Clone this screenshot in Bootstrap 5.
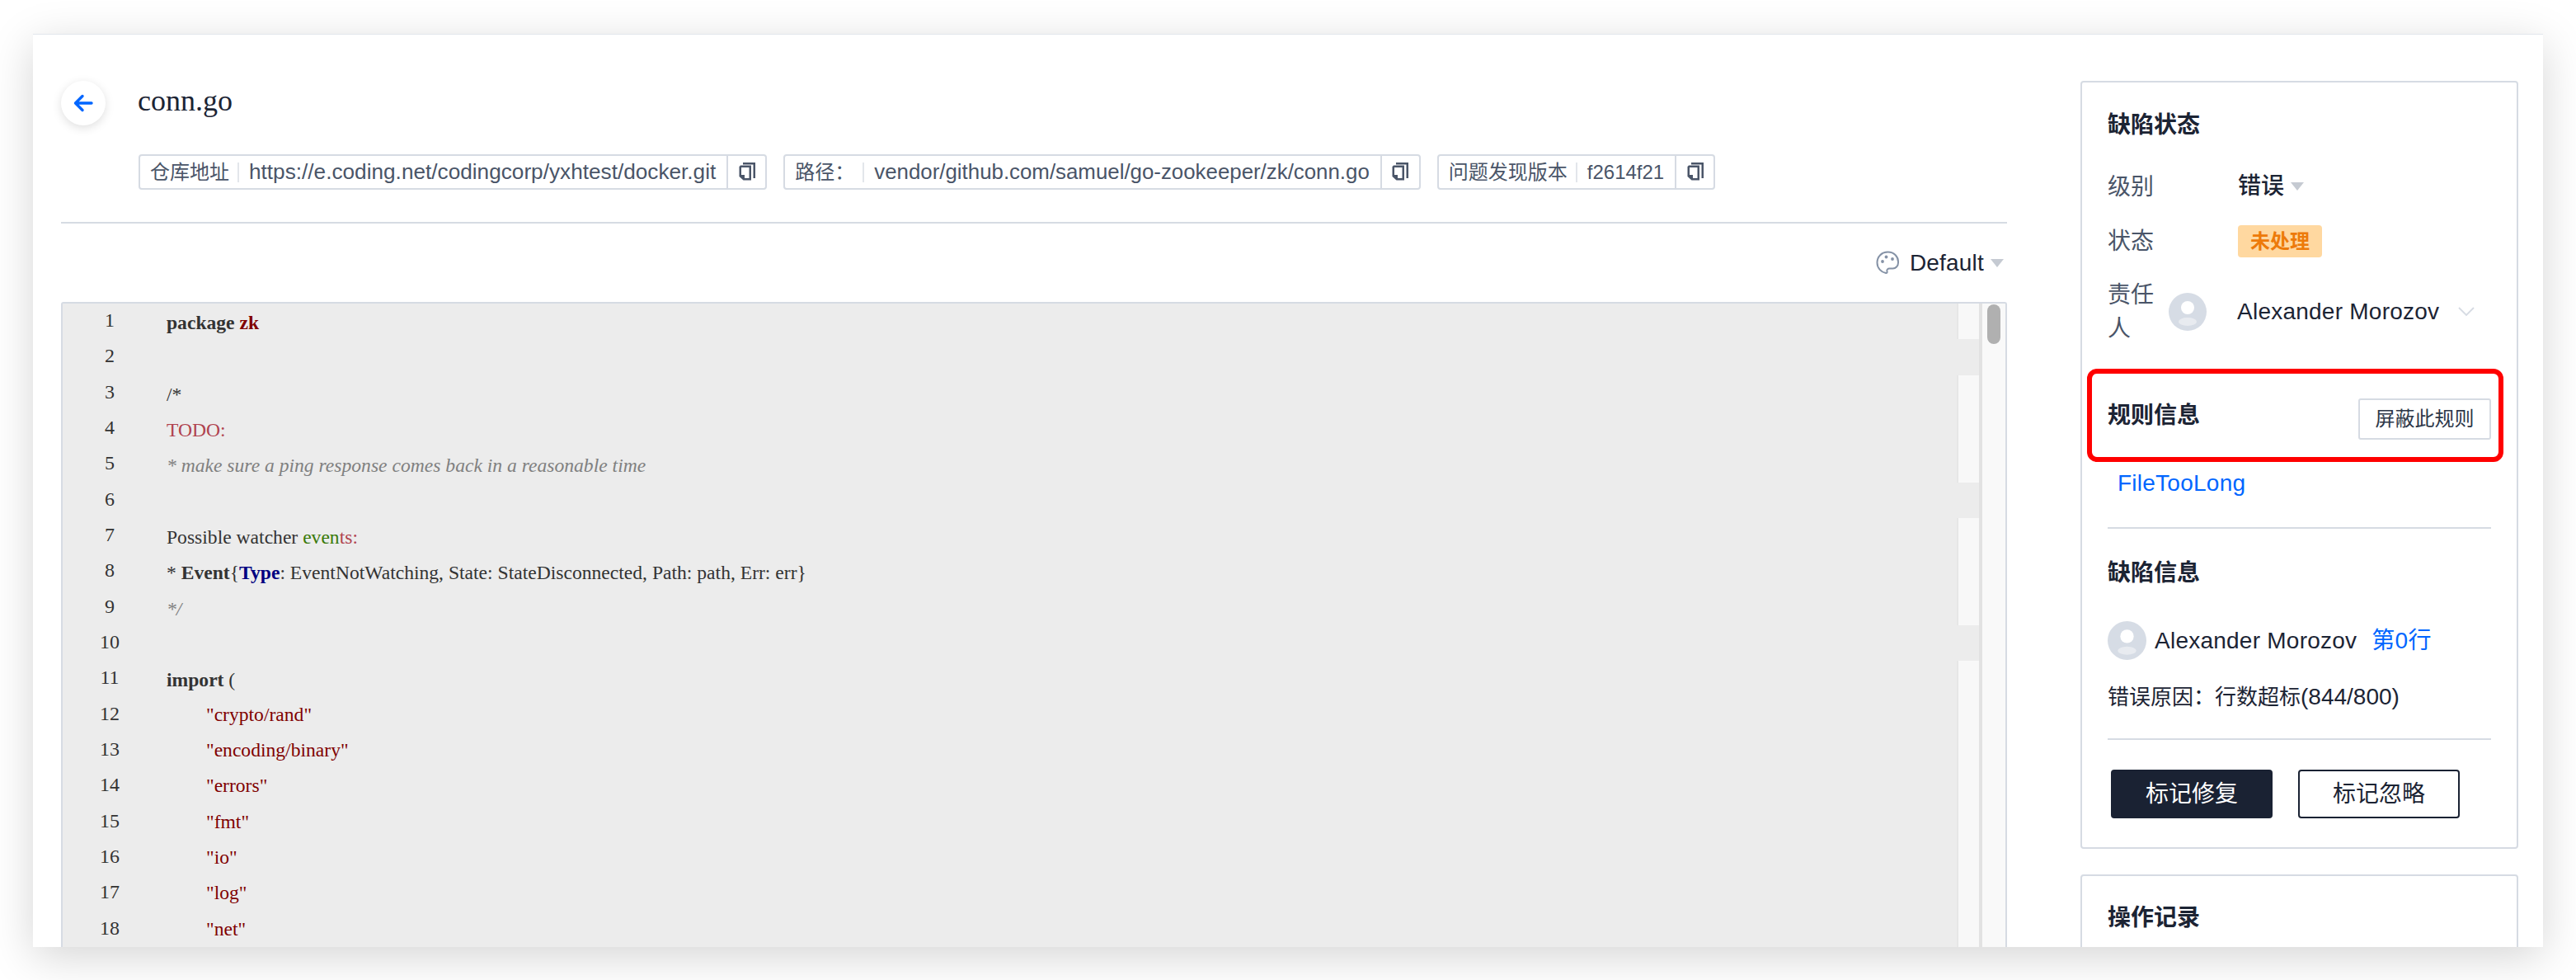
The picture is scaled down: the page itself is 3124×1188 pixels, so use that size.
<!DOCTYPE html>
<html lang="zh">
<head>
<meta charset="utf-8">
<title>conn.go</title>
<link rel="stylesheet" href="https://cdn.jsdelivr.net/npm/bootstrap@5.3.0/dist/css/bootstrap.min.css">
<style>
html,body{height:100%;}
body{background:#fff;overflow:hidden;font-family:"Liberation Sans","Noto Sans CJK SC",sans-serif;font-size:28px;color:#1c2434;}
.win{margin:41px 40px 0;height:1107px;background:#fff;border-top:1px solid #e2e6ec;box-shadow:0 12px 50px rgba(0,0,0,.17);overflow:hidden;position:relative;padding:0 30px 0 34px;}
.leftcol{width:2360px;padding-top:56px;height:1200px;}
.backbtn{width:54px;height:54px;border-radius:50%;background:#fff;box-shadow:0 3px 12px rgba(0,0,0,.13);color:#0066ff;}
.fname{font-family:"Liberation Serif",serif;font-size:36px;line-height:54px;margin-left:39px;margin-top:-3px;color:#1c2434;height:54px;}
.chips{margin:35px 0 0 94px;gap:20px;}
.chip{height:43px;border:2px solid #d6dbe3;border-radius:4px;font-size:24px;color:#4a5568;white-space:nowrap;}
.chip .lab{padding:0 12px;position:relative;}
.chip .lab::after{content:"";position:absolute;right:0;top:6px;bottom:6px;width:2px;background:#e3e6eb;}
.chip .val{padding:0 13px 0 12px;font-size:25.85px;}
.chip .val.wd{font-size:26.2px;}
.chip .val.sm{font-size:24px;}
.chip .cpy{width:47px;height:100%;border-left:2px solid #d6dbe3;}
.rule1{height:2px;background:#d6dbe3;margin-top:39px;}
.tool{height:95px;gap:0;font-size:28px;letter-spacing:.2px;}
.tool svg.pal{margin-right:12px;}
.caret1{width:0;height:0;border-left:8px solid transparent;border-right:8px solid transparent;border-top:10px solid #c5cad2;}
.editor{border:2px solid #d6dbe3;border-bottom:0;border-radius:3px 3px 0 0;background:#ececec;height:800px;overflow:hidden;font-family:"Liberation Serif",serif;font-size:23.6px;color:#333;}
.lines{width:2324px;}
.ln{height:43.33px;}
.num{width:114px;text-align:center;line-height:40px;flex:none;font-size:24px;}
.src{flex:1 1 auto;padding-left:12px;line-height:47px;white-space:pre;}
.src.ind{padding-left:60px;line-height:42px;}
.ov{width:27px;flex:none;}
.ov.on{background:#f8f8f8;box-shadow:inset 2px 0 0 #e6e6e6;}
.sep{width:4px;flex:none;background:#e2e2e2;}
.track{width:28px;flex:none;background:#f9f9f9;}
.thumb{width:16px;height:48px;border-radius:8px;background:#b0b0b0;margin:1px 0 0 6px;}
.s{color:#800000;font-weight:700;}
.str{color:#800000;}
.c{color:#808080;font-style:italic;}
.td{color:#b0424e;}
.g{color:#3a7a0a;}
.ty{color:#000080;font-weight:700;}
.rightcol{width:531px;margin-left:89px;padding-top:56px;flex:none;}
.panel{border:2px solid #d6dbe3;border-radius:4px;background:#fff;padding:32px 31px 0;}
.panel2{margin-top:31px;padding-top:31px;height:200px;}
.ttl{font-size:28px;font-weight:700;line-height:40px;height:40px;color:#1c2434;}
.lbl{color:#4a5568;line-height:41px;}
.lbl1{width:158px;flex:none;}
.badge1{width:102px;height:39px;border-radius:4px;background:#ffd8a0;color:#ed7a0a;font-size:24px;font-weight:700;}
.ava{flex:none;}
.lnk{color:#0066ff;text-decoration:none;letter-spacing:.25px;}
.dim{color:#1c2434;letter-spacing:.24px;}
.btn-mute{width:161px;height:50px;border:2px solid #d6dbe3;border-radius:3px;font-size:24px;color:#2d3748;background:#fff;padding:0;}
.rule2{height:2px;background:#d6dbe3;}
.act{width:196px;height:59px;border-radius:4px;font-size:28px;padding:0;}
.act-d{background:#1a2233;border:2px solid #1a2233;color:#fff;}
.act-l{background:#fff;border:2px solid #1a2233;color:#1c2434;}
.why{font-size:26px;line-height:40px;}
.why span{font-size:28px;}
.redbox{position:absolute;left:2491px;top:405px;width:505px;height:113px;border:6px solid #ff0000;border-radius:12px;pointer-events:none;}
</style>
</head>
<body>
<div class="win d-flex">
  <div class="leftcol flex-shrink-0">
    <div class="d-flex align-items-start">
      <div class="backbtn d-flex align-items-center justify-content-center flex-shrink-0">
        <svg width="24" height="22" viewBox="0 0 24 22" fill="none" stroke="currentColor" stroke-width="3.4" stroke-linecap="round" stroke-linejoin="round"><path d="M22 11H3M11 2.500 2.500 11l8.500 8.500"/></svg>
      </div>
      <div class="fname">conn.go</div>
    </div>
    <div class="chips d-flex">
      <div class="chip d-flex align-items-center"><span class="lab">仓库地址</span><span class="val wd">https://e.coding.net/codingcorp/yxhtest/docker.git</span><span class="cpy d-flex align-items-center justify-content-center"><svg width="22" height="25" viewBox="0 0 22 25"><path d="M6 1h15v19h-2.500V3.500H6z" fill="#4a5568"/><path d="M3 4.500h13v18H6.500L1.500 18V6z" fill="#4a5568"/><path d="M4 7h9.500v13H8v-4H4z" fill="#fff"/></svg></span></div>
      <div class="chip d-flex align-items-center"><span class="lab">路径：</span><span class="val">vendor/github.com/samuel/go-zookeeper/zk/conn.go</span><span class="cpy d-flex align-items-center justify-content-center"><svg width="22" height="25" viewBox="0 0 22 25"><path d="M6 1h15v19h-2.500V3.500H6z" fill="#4a5568"/><path d="M3 4.500h13v18H6.500L1.500 18V6z" fill="#4a5568"/><path d="M4 7h9.500v13H8v-4H4z" fill="#fff"/></svg></span></div>
      <div class="chip d-flex align-items-center"><span class="lab">问题发现版本</span><span class="val sm">f2614f21</span><span class="cpy d-flex align-items-center justify-content-center"><svg width="22" height="25" viewBox="0 0 22 25"><path d="M6 1h15v19h-2.500V3.500H6z" fill="#4a5568"/><path d="M3 4.500h13v18H6.500L1.500 18V6z" fill="#4a5568"/><path d="M4 7h9.500v13H8v-4H4z" fill="#fff"/></svg></span></div>
    </div>
    <div class="rule1"></div>
    <div class="tool d-flex align-items-center justify-content-end">
      <svg class="pal" width="29" height="29" viewBox="0 0 29 29" fill="none"><path d="M14.500 1.500C7 1.500 1.500 7 1.500 14.500c0 6.500 5 11.500 10.500 12.500 1.500.3 1.800-.8 1.500-2-.5-2 .5-3.500 3-3.500h4c3.500 0 6.500-3 6.500-7C27.500 7 22 1.500 14.500 1.500z" stroke="#8592a6" stroke-width="2"/><circle cx="8" cy="13" r="1.900" fill="#8592a6"/><circle cx="12.500" cy="7.500" r="1.900" fill="#8592a6"/><circle cx="20" cy="10" r="1.900" fill="#8592a6"/></svg>
      <span>Default</span>
      <span class="caret1 ms-2"></span>
      <span style="width:4px"></span>
    </div>
    <div class="editor d-flex">
      <div class="lines flex-shrink-0">
        <div class="ln d-flex"><span class="num">1</span><span class="src"><b>package</b> <span class="s">zk</span></span><span class="ov on"></span></div>
        <div class="ln d-flex"><span class="num">2</span><span class="src"></span><span class="ov"></span></div>
        <div class="ln d-flex"><span class="num">3</span><span class="src">/*</span><span class="ov on"></span></div>
        <div class="ln d-flex"><span class="num">4</span><span class="src"><span class="td">TODO:</span></span><span class="ov on"></span></div>
        <div class="ln d-flex"><span class="num">5</span><span class="src"><span class="c">* make sure a ping response comes back in a reasonable time</span></span><span class="ov on"></span></div>
        <div class="ln d-flex"><span class="num">6</span><span class="src"></span><span class="ov"></span></div>
        <div class="ln d-flex"><span class="num">7</span><span class="src">Possible watcher <span class="g">even</span><span class="td">ts:</span></span><span class="ov on"></span></div>
        <div class="ln d-flex"><span class="num">8</span><span class="src">* <b>Event</b>{<span class="ty">Type</span>: EventNotWatching, State: StateDisconnected, Path: path, Err: err}</span><span class="ov on"></span></div>
        <div class="ln d-flex"><span class="num">9</span><span class="src"><span class="c">*/</span></span><span class="ov on"></span></div>
        <div class="ln d-flex"><span class="num">10</span><span class="src"></span><span class="ov"></span></div>
        <div class="ln d-flex"><span class="num">11</span><span class="src"><b>import</b> (</span><span class="ov on"></span></div>
        <div class="ln d-flex"><span class="num">12</span><span class="src ind str">"crypto/rand"</span><span class="ov on"></span></div>
        <div class="ln d-flex"><span class="num">13</span><span class="src ind str">"encoding/binary"</span><span class="ov on"></span></div>
        <div class="ln d-flex"><span class="num">14</span><span class="src ind str">"errors"</span><span class="ov on"></span></div>
        <div class="ln d-flex"><span class="num">15</span><span class="src ind str">"fmt"</span><span class="ov on"></span></div>
        <div class="ln d-flex"><span class="num">16</span><span class="src ind str">"io"</span><span class="ov on"></span></div>
        <div class="ln d-flex"><span class="num">17</span><span class="src ind str">"log"</span><span class="ov on"></span></div>
        <div class="ln d-flex"><span class="num">18</span><span class="src ind str">"net"</span><span class="ov on"></span></div>
      </div>
      <div class="sep"></div>
      <div class="track"><div class="thumb"></div></div>
    </div>
  </div>
  <div class="rightcol">
    <div class="panel">
      <div class="ttl">缺陷状态</div>
      <div class="d-flex align-items-center" style="margin-top:33px"><span class="lbl lbl1">级别</span><span class="fw-medium">错误</span><span class="caret1 ms-2"></span></div>
      <div class="d-flex align-items-center" style="margin-top:25px"><span class="lbl lbl1">状态</span><span class="badge1 d-flex align-items-center justify-content-center">未处理</span></div>
      <div class="d-flex align-items-center" style="margin-top:24px">
        <span class="lbl flex-shrink-0" style="width:56px">责任人</span>
        <svg class="ava" style="margin-left:18px" width="46" height="46" viewBox="0 0 46 46"><circle cx="23" cy="23" r="23" fill="#d6dce5"/><circle cx="23" cy="18" r="8" fill="#fff"/><ellipse cx="23" cy="35" rx="11" ry="5" fill="#e8ebf0"/></svg>
        <span class="dim" style="margin-left:37px">Alexander Morozov</span>
        <svg class="ava" style="margin-left:23px" width="20" height="12" viewBox="0 0 20 12" fill="none" stroke="#d6dbe3" stroke-width="1.800"><path d="M1 1l9 9 9-9"/></svg>
      </div>
      <div class="d-flex justify-content-between align-items-start" style="margin-top:64px">
        <div class="ttl" style="margin-top:1px">规则信息</div>
        <button class="btn btn-mute" type="button">屏蔽此规则</button>
      </div>
      <div style="margin:33px 0 0 12px;line-height:40px"><a class="lnk" href="#">FileTooLong</a></div>
      <div class="rule2" style="margin-top:33px"></div>
      <div class="ttl" style="margin-top:34px">缺陷信息</div>
      <div class="d-flex align-items-center" style="margin-top:38px">
        <svg class="ava" width="47" height="47" viewBox="0 0 46 46"><circle cx="23" cy="23" r="23" fill="#d6dce5"/><circle cx="23" cy="18" r="8" fill="#fff"/><ellipse cx="23" cy="35" rx="11" ry="5" fill="#e8ebf0"/></svg>
        <span class="dim" style="margin-left:10px">Alexander Morozov</span>
        <a class="lnk" href="#" style="margin-left:18px">第0行</a>
      </div>
      <div class="why" style="margin-top:25px">错误原因：行数超标<span>(844/800)</span></div>
      <div class="rule2" style="margin-top:30px"></div>
      <div class="d-flex" style="margin:36px 0 0 4px;gap:31px;padding-bottom:35px">
        <button class="btn act act-d" type="button">标记修复</button>
        <button class="btn act act-l" type="button">标记忽略</button>
      </div>
    </div>
    <div class="panel panel2">
      <div class="ttl">操作记录</div>
    </div>
  </div>
  <div class="redbox"></div>
</div>
<script src="https://cdn.jsdelivr.net/npm/bootstrap@5.3.0/dist/js/bootstrap.bundle.min.js"></script>
</body>
</html>
